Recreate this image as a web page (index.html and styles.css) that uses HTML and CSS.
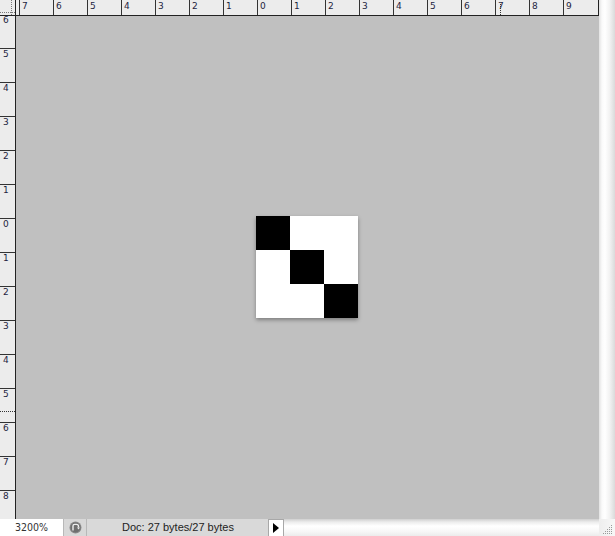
FILE: index.html
```html
<!DOCTYPE html>
<html lang="en">
<head>
    <meta charset="UTF-8">
    <title>Untitled-1 @ 3200%</title>
    <link rel="stylesheet" href="styles.css">
</head>
<body>
    <div class="window">
        <div class="corner"></div>

        <div class="ruler-top">
            <span class="tick part"></span>
            <span class="tick">7</span>
            <span class="tick">6</span>
            <span class="tick">5</span>
            <span class="tick">4</span>
            <span class="tick">3</span>
            <span class="tick">2</span>
            <span class="tick">1</span>
            <span class="tick">0</span>
            <span class="tick">1</span>
            <span class="tick">2</span>
            <span class="tick">3</span>
            <span class="tick">4</span>
            <span class="tick">5</span>
            <span class="tick">6</span>
            <span class="tick">7</span>
            <span class="tick">8</span>
            <span class="tick">9</span>
            <i class="marker-v"></i>
        </div>

        <div class="vscroll"></div>

        <div class="ruler-left">
            <span class="mark part">6</span>
            <span class="mark">5</span>
            <span class="mark">4</span>
            <span class="mark">3</span>
            <span class="mark">2</span>
            <span class="mark">1</span>
            <span class="mark">0</span>
            <span class="mark">1</span>
            <span class="mark">2</span>
            <span class="mark">3</span>
            <span class="mark">4</span>
            <span class="mark">5</span>
            <span class="mark">6</span>
            <span class="mark">7</span>
            <span class="mark">8</span>
            <i class="marker-h"></i>
        </div>

        <div class="canvas">
            <div class="image">
                <div class="px on"></div><div class="px"></div><div class="px"></div>
                <div class="px"></div><div class="px on"></div><div class="px"></div>
                <div class="px"></div><div class="px"></div><div class="px on"></div>
            </div>
        </div>

        <div class="status">
            <div class="zoom">3200%</div>
            <div class="status-btn">
                <svg width="13" height="13" viewBox="0 0 13 13">
                    <circle cx="6.5" cy="6.5" r="6" fill="#8a8a8a"/>
                    <circle cx="6.5" cy="6.5" r="5" fill="#6f6f6f"/>
                    <path d="M4 9.5 V5 A1.6 1.6 0 0 1 5.6 3.4 H7.5 A2 2 0 0 1 9.5 5.4 V6.6" fill="none" stroke="#eee" stroke-width="1.4"/>
                    <path d="M8 6.4 L9.5 8.4 L11 6.4 Z" fill="#eee"/>
                </svg>
            </div>
            <div class="doc-info">Doc: 27 bytes/27 bytes</div>
            <div class="arrow-btn"><span class="tri"></span></div>
            <div class="hscroll"></div>
            <div class="grip">
                <svg width="12" height="12" viewBox="0 0 12 12">
                    <g fill="#9a9a9a">
                        <rect x="10" y="2" width="1" height="1"/>
                        <rect x="8" y="4" width="1" height="1"/><rect x="10" y="4" width="1" height="1"/>
                        <rect x="6" y="6" width="1" height="1"/><rect x="8" y="6" width="1" height="1"/><rect x="10" y="6" width="1" height="1"/>
                        <rect x="4" y="8" width="1" height="1"/><rect x="6" y="8" width="1" height="1"/><rect x="8" y="8" width="1" height="1"/><rect x="10" y="8" width="1" height="1"/>
                        <rect x="2" y="10" width="1" height="1"/><rect x="4" y="10" width="1" height="1"/><rect x="6" y="10" width="1" height="1"/><rect x="8" y="10" width="1" height="1"/><rect x="10" y="10" width="1" height="1"/>
                    </g>
                </svg>
            </div>
        </div>
    </div>
</body>
</html>
```

FILE: styles.css
```css
* {
    box-sizing: border-box;
}
body {
    margin: 0;
    padding: 0;
    background: #ffffff;
    font-family: "DejaVu Sans", "Liberation Sans", sans-serif;
}
.window {
    width: 615px;
    height: 536px;
    display: grid;
    grid-template-columns: 16px 583px 16px;
    grid-template-rows: 16px 503px 17px;
    overflow: hidden;
}
.corner {
    background: #ececec;
    border-right: 1px solid #222;
    border-bottom: 1px solid #222;
    position: relative;
    background-image:
        linear-gradient(to bottom, #777 50%, transparent 50%),
        linear-gradient(to right, #777 50%, transparent 50%);
    background-size: 1px 2px, 2px 1px;
    background-repeat: repeat-y, repeat-x;
    background-position: 11px 0, 0 12px;
}
.ruler-top {
    position: relative;
    display: flex;
    background: #ececec;
    border-bottom: 1px solid #222;
    border-right: 1px solid #222;
    overflow: hidden;
}
.tick {
    flex: 0 0 34px;
    height: 15px;
    border-left: 1px solid #333;
    font-size: 9px;
    line-height: 12px;
    padding-left: 2px;
    color: #1d2440;
}
.tick.part {
    flex-basis: 3px;
    border-left: none;
}
.marker-v {
    position: absolute;
    left: 484px;
    top: 4px;
    height: 11px;
    border-left: 1px dotted #333;
}
.vscroll {
    grid-row: 1 / 3;
    grid-column: 3;
    background: linear-gradient(to right, #e2e2e2 0, #fafafa 3px, #ffffff 6px, #f1f1f1 11px, #dadada 16px);
}
.ruler-left {
    position: relative;
    display: flex;
    flex-direction: column;
    background: #ececec;
    border-right: 1px solid #222;
    overflow: hidden;
}
.mark {
    flex: 0 0 34px;
    border-top: 1px solid #333;
    font-size: 9px;
    line-height: 11px;
    padding-left: 3px;
    color: #1d2440;
}
.mark.part {
    flex-basis: 32px;
    border-top: none;
    line-height: 8px;
}
.marker-h {
    position: absolute;
    left: 0;
    top: 395px;
    width: 15px;
    border-top: 1px dotted #333;
}
.canvas {
    background: #c0c0c0;
    display: flex;
    justify-content: center;
    align-items: center;
    padding: 0 2px 2px 0;
}
.image {
    width: 102px;
    height: 102px;
    display: grid;
    grid-template-columns: repeat(3, 34px);
    grid-template-rows: repeat(3, 34px);
    background: #ffffff;
    box-shadow: 0 2px 4px rgba(0, 0, 0, 0.35);
}
.px.on {
    background: #000000;
}
.status {
    grid-column: 1 / 4;
    display: flex;
    height: 17px;
    font-size: 11px;
    color: #222;
}
.zoom {
    width: 63px;
    background: #ffffff;
    text-align: right;
    padding-right: 15px;
    line-height: 17px;
    font-family: "DejaVu Sans Condensed", "DejaVu Sans", sans-serif;
    font-size: 10.5px;
    color: #333;
}
.status-btn {
    width: 24px;
    background: #d8d8d8;
    border-left: 1px solid #b8b8b8;
    border-right: 1px solid #b8b8b8;
    display: flex;
    justify-content: center;
    align-items: center;
}
.doc-info {
    width: 181px;
    background: #d9d9d9;
    line-height: 17px;
    padding-left: 35px;
    font-family: "Liberation Sans", sans-serif;
    font-size: 11px;
}
.arrow-btn {
    width: 16px;
    background: #ffffff;
    border: 1px solid #a8a8a8;
    border-bottom: none;
    display: flex;
    align-items: center;
    justify-content: center;
}
.tri {
    width: 0;
    height: 0;
    border-top: 5px solid transparent;
    border-bottom: 5px solid transparent;
    border-left: 6px solid #000;
}
.hscroll {
    flex: 1;
    background: linear-gradient(to bottom, #cfcfcf 0, #ececec 3px, #ffffff 7px, #f6f6f6 13px, #ececec 17px);
}
.grip {
    width: 16px;
    background: linear-gradient(to right, #eeeeee, #f7f7f7);
    display: flex;
    align-items: flex-end;
    justify-content: flex-end;
    padding: 0 2px 1px 0;
}
```
